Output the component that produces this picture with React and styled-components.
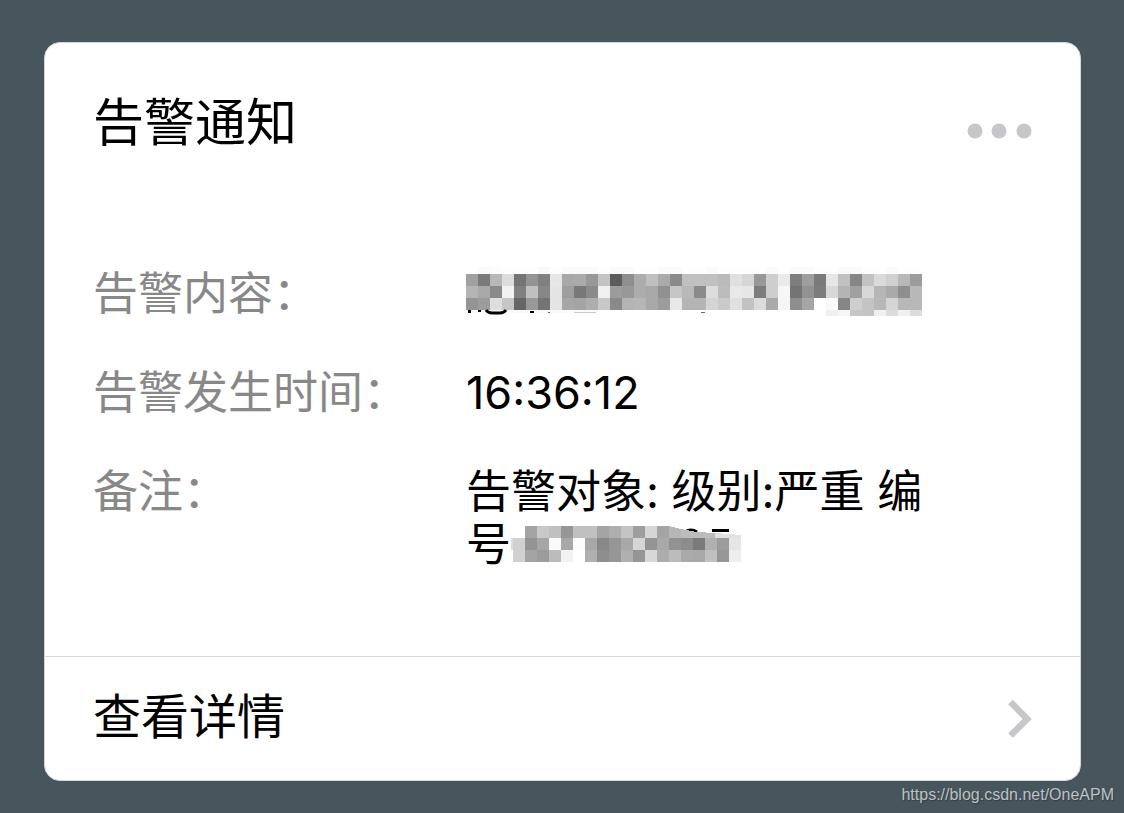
import React from "react";
import styled, { createGlobalStyle } from "styled-components";

const GlobalStyle = createGlobalStyle`
  * { box-sizing: border-box; }
  body {
    margin: 0;
    background: #47555c;
    font-family: Inter, "Noto Sans CJK SC", sans-serif;
    color: #000;
  }
`;

const Page = styled.div`
  padding: 42px 43px 0 44px;
`;

const Card = styled.article`
  background: #fff;
  border: 1px solid #d3d7d9;
  border-radius: 16px;
  overflow: hidden;
`;

const Header = styled.header`
  display: flex;
  justify-content: space-between;
  align-items: center;
  padding: 42px 48px 0 48px;
`;

const Title = styled.h1`
  margin: 0;
  font-size: 51px;
  line-height: 76px;
  font-weight: 400;
`;

const MoreButton = styled.button`
  display: flex;
  padding: 16px 0 0;
  border: 0;
  background: none;
  cursor: pointer;
`;

const Details = styled.dl`
  display: grid;
  grid-template-columns: 325px 1fr;
  column-gap: 48px;
  row-gap: 46px;
  margin: 0;
  padding: 106px 147px 85px 48px;
  font-size: 45px;
  line-height: 53px;
`;

const Label = styled.dt`
  color: #888;
`;

const Value = styled.dd`
  margin: 0;
`;

const Mosaic = styled.svg`
  display: inline-block;
  vertical-align: top;
`;

const DetailLink = styled.a`
  display: flex;
  justify-content: space-between;
  align-items: center;
  padding: 24px 48px 27px;
  border-top: 1px solid #d9d9d9;
  color: inherit;
  font-size: 48px;
  line-height: 72px;
  text-decoration: none;
`;

const Source = styled.footer`
  margin-right: -33px;
  padding-top: 4px;
  color: #bcc2c5;
  font-family: "Liberation Sans", sans-serif;
  font-size: 16px;
  line-height: 20px;
  text-align: right;
  text-shadow: 1px 1px 1px #333e44;
`;

const CELL = 12;

// Each row holds one two-digit hex grey level per cell.
const contentRows = [
  "fefafcfefefef8fefafafafefafafefefafafefefafefefefefafefafafefefafafefefafefe",
  "a07ab8dc749480e6a8aa98c45c8eacbfaa8ac0c0c0bae0d698ceea7e9e7ae6c086c2dad0b89c",
  "b4a88af280c086e49e788af09c98aca890c6b88adcbce8e67ccef674927cd8b4a0d8b6aa8eb8",
  "949cdec6669874e4a6a4aec88ab4b6a89ce8b4b4d4cae0c2dcaaf68ea6fffa86cec4b8d4b8b8",
];
const contentTail = "f0f6c6c4f0dcf0dc";
const numberRows = [
  "ffa4c8c096c0c0a4aec49ed6a4ffffffffffff",
  "d094a6faa8fca88896a8d694a8928c7ab09ce6",
  "d0a49cbcf2ffb08e96b096d8acbcaaa8c096ee",
];

const shades = (row) => row.match(/../g);

function Cells({ row, x = 0, y, height = CELL }) {
  return shades(row).map((s, i) => (
    <rect key={i} x={x + i * CELL} y={y} width={CELL} height={height} fill={`#${s}${s}${s}`} />
  ));
}

function ContentMosaic() {
  return (
    <Mosaic width="456" height="53" viewBox="0 1 456 53" shapeRendering="crispEdges" aria-hidden="true">
      {contentRows.map((row, i) => (
        <Cells key={i} row={row} y={i * CELL - 4} />
      ))}
      <Cells row={contentTail} x={360} y={44} height={6} />
      <path d="M0 44h132v3H0z" fill="#fafafa" />
      <g fill="#000" shapeRendering="auto">
        <path d="M2 44h3v3H2zM12 44h3v2h-3zM64 45h4v2h-4z" />
        <path d="M20 44q2 3 6 3h8q4 0 6-3" fill="none" stroke="#000" strokeWidth="3" />
        <path d="M82 46h2v1h-2zM235 46h4v1h-4z" opacity=".6" />
        <path d="M108 46h22v1h-22z" opacity=".2" />
      </g>
    </Mosaic>
  );
}

function NumberMosaic() {
  return (
    <Mosaic width="232" height="53" viewBox="0 0 232 53" shapeRendering="crispEdges" aria-hidden="true">
      {numberRows.map((row, i) => (
        <Cells key={i} row={row} x={2} y={8 + i * CELL} />
      ))}
      <path d="M0 20h2v12H0z" fill="#ddd" />
      <path d="M174 14q6-4 12 0" fill="none" stroke="#000" strokeWidth="3" shapeRendering="auto" />
      <path d="M201 11h17v3h-17z" fill="#000" />
      <path d="M158 8l12 3v9h-12z" fill="#b6b6b6" />
      <path d="M170 11l16 3 18 1v5h-34z" fill="#bcbcbc" />
      <path d="M204 15l26 2v3h-26z" fill="#e2e2e2" />
    </Mosaic>
  );
}

export default function App() {
  return (
    <>
      <GlobalStyle />
      <Page lang="zh-CN">
        <Card>
          <Header>
            <Title>告警通知</Title>
            <MoreButton aria-label="更多">
              <svg width="65" height="16" viewBox="0 0 65 16" fill="#c7c6cb">
                <circle cx="8" cy="8" r="7.5" />
                <circle cx="32" cy="8" r="7.5" />
                <circle cx="57" cy="8" r="7.5" />
              </svg>
            </MoreButton>
          </Header>
          <Details>
            <Label>告警内容：</Label>
            <Value><ContentMosaic /></Value>
            <Label>告警发生时间：</Label>
            <Value>16:36:12</Value>
            <Label>备注：</Label>
            <Value>告警对象: 级别:严重 编号<NumberMosaic /></Value>
          </Details>
          <DetailLink href="#details">
            查看详情
            <svg width="24" height="42" viewBox="0 0 24 42" fill="none" stroke="#c7c6cb" strokeWidth="6.5">
              <path d="M2.5 6L19.2 23L2.5 39.5" />
            </svg>
          </DetailLink>
        </Card>
        <Source>https://blog.csdn.net/OneAPM</Source>
      </Page>
    </>
  );
}
